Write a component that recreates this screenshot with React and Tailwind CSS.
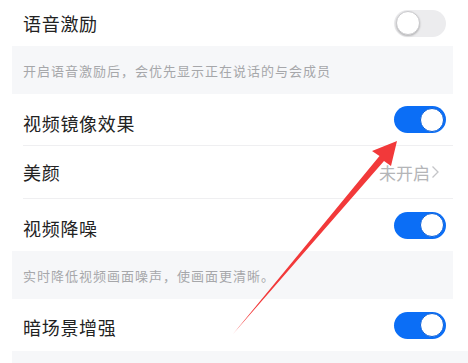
import React from "react";

const Toggle = ({ on }) => (
  <div
    className={`w-[52px] h-[27px] rounded-full p-[2px] flex items-center ${
      on ? "bg-[#0b6ef6] justify-end" : "bg-[#ececee] justify-start"
    }`}
  >
    <div
      className={`w-[24px] h-[24px] rounded-full bg-white ${
        on ? "border border-[#0a5fd8]" : "border border-[#c9c9cc] shadow-[0_1px_2px_rgba(0,0,0,0.25)]"
      }`}
    />
  </div>
);

const Row = ({ title, h, children, pt = "" }) => (
  <div className={`flex items-center justify-between pl-[11px] pr-[7px] ${h}`}>
    <span className={`text-[18px] tracking-[0.7px] text-[#222222] leading-none ${pt}`}>{title}</span>
    {children}
  </div>
);

const Desc = ({ text }) => (
  <div className="h-[48px] bg-[#f6f7f9] flex items-center pl-[11px]">
    <span className="text-[13px] tracking-[1px] text-[#a6a7aa] leading-none">{text}</span>
  </div>
);

export default function App() {
  return (
    <div
      className="relative w-[468px] h-[363px] bg-white overflow-hidden"
      style={{ fontFamily: '"Noto Sans CJK SC", "Noto Sans", sans-serif' }}
    >
      <div className="ml-[12px] w-[441px] flex flex-col">
        <Row title="语音激励" h="h-[46px]">
          <Toggle on={false} />
        </Row>
        <Desc text="开启语音激励后，会优先显示正在说话的与会成员" />
        <div className="ml-[11px]">
          <div className="flex items-center justify-between pr-[7px] h-[52px] border-b border-[#efeff1]">
            <span className="text-[18px] tracking-[0.7px] text-[#222222] leading-none pt-[6px]">视频镜像效果</span>
            <Toggle on />
          </div>
          <div className="flex items-center justify-between pr-[13px] h-[53px] border-b border-[#efeff1]">
            <span className="text-[18px] tracking-[0.7px] text-[#222222] leading-none">美颜</span>
            <span className="text-[17px] text-[#b4b5b8] leading-none flex items-center">
              未开启
              <svg width="9" height="14" viewBox="0 0 9 14" className="ml-[1px]">
                <path d="M1.5 1.5 L7 7 L1.5 12.5" fill="none" stroke="#c4c5c8" strokeWidth="1.3" />
              </svg>
            </span>
          </div>
          <div className="flex items-center justify-between pr-[7px] h-[52px]">
            <span className="text-[18px] tracking-[0.7px] text-[#222222] leading-none pt-[5px]">视频降噪</span>
            <Toggle on />
          </div>
        </div>
        <Desc text="实时降低视频画面噪声，使画面更清晰。" />
        <Row title="暗场景增强" h="h-[52px]" pt="pt-[3px]">
          <Toggle on />
        </Row>
      </div>
      <div className="ml-[12px] h-[12px] bg-[#f6f7f9]" />
      <svg className="absolute left-0 top-0 pointer-events-none" width="468" height="363" viewBox="0 0 468 363">
        <path
          d="M397 141 L372 151 L379.5 156 L233 334 L384 161 L391 166 Z"
          fill="#f2393a"
        />
      </svg>
    </div>
  );
}
